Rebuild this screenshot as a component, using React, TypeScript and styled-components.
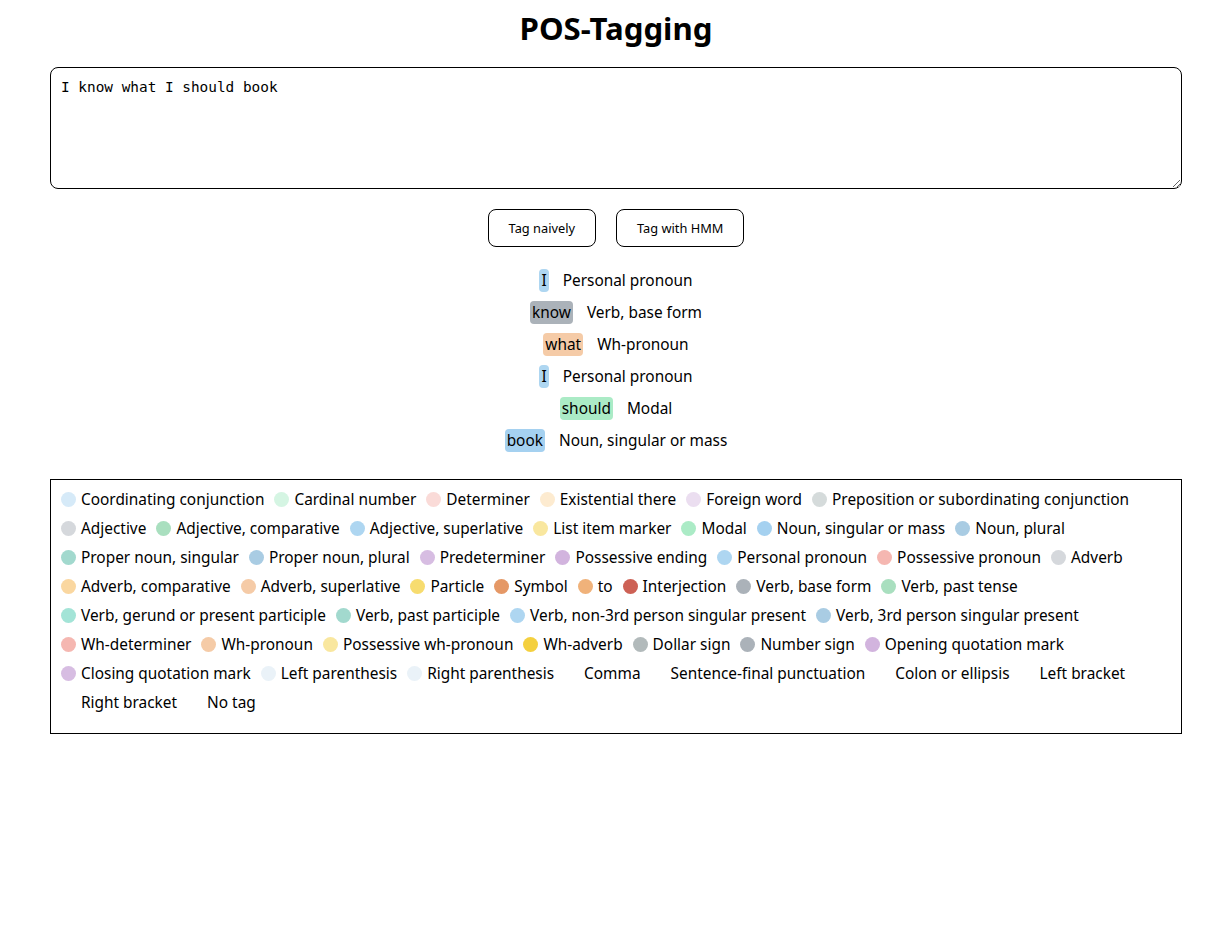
import React, { useState } from 'react';
import styled, { createGlobalStyle } from 'styled-components';

const GlobalStyle = createGlobalStyle`
  html, body {
    margin: 0;
    padding: 0;
    background: #ffffff;
  }
  body {
    font-family: 'Noto Sans', 'Open Sans', sans-serif;
    color: #000000;
  }
`;

const TAGS: { tag: string; label: string; color?: string }[] = [
  { tag: 'CC', label: 'Coordinating conjunction', color: '#d6eaf8' },
  { tag: 'CD', label: 'Cardinal number', color: '#d5f5e3' },
  { tag: 'DT', label: 'Determiner', color: '#fadbd8' },
  { tag: 'EX', label: 'Existential there', color: '#fdebd0' },
  { tag: 'FW', label: 'Foreign word', color: '#ebdef0' },
  { tag: 'IN', label: 'Preposition or subordinating conjunction', color: '#d5dbdb' },
  { tag: 'JJ', label: 'Adjective', color: '#d5d8dc' },
  { tag: 'JJR', label: 'Adjective, comparative', color: '#a9dfbf' },
  { tag: 'JJS', label: 'Adjective, superlative', color: '#aed6f1' },
  { tag: 'LS', label: 'List item marker', color: '#f9e79f' },
  { tag: 'MD', label: 'Modal', color: '#abebc6' },
  { tag: 'NN', label: 'Noun, singular or mass', color: '#a5d1f0' },
  { tag: 'NNS', label: 'Noun, plural', color: '#a9cce3' },
  { tag: 'NNP', label: 'Proper noun, singular', color: '#a2d9ce' },
  { tag: 'NNPS', label: 'Proper noun, plural', color: '#a9cce3' },
  { tag: 'PDT', label: 'Predeterminer', color: '#d7bde2' },
  { tag: 'POS', label: 'Possessive ending', color: '#d2b4de' },
  { tag: 'PRP', label: 'Personal pronoun', color: '#aed6f1' },
  { tag: 'PRP$', label: 'Possessive pronoun', color: '#f5b7b1' },
  { tag: 'RB', label: 'Adverb', color: '#d5d8dc' },
  { tag: 'RBR', label: 'Adverb, comparative', color: '#fad7a0' },
  { tag: 'RBS', label: 'Adverb, superlative', color: '#f5cba7' },
  { tag: 'RP', label: 'Particle', color: '#f7dc6f' },
  { tag: 'SYM', label: 'Symbol', color: '#e59866' },
  { tag: 'TO', label: 'to', color: '#f0b27a' },
  { tag: 'UH', label: 'Interjection', color: '#cd6155' },
  { tag: 'VB', label: 'Verb, base form', color: '#abb2b9' },
  { tag: 'VBD', label: 'Verb, past tense', color: '#a9dfbf' },
  { tag: 'VBG', label: 'Verb, gerund or present participle', color: '#a3e4d7' },
  { tag: 'VBN', label: 'Verb, past participle', color: '#a2d9ce' },
  { tag: 'VBP', label: 'Verb, non-3rd person singular present', color: '#aed6f1' },
  { tag: 'VBZ', label: 'Verb, 3rd person singular present', color: '#a9cce3' },
  { tag: 'WDT', label: 'Wh-determiner', color: '#f5b7b1' },
  { tag: 'WP', label: 'Wh-pronoun', color: '#f5cba7' },
  { tag: 'WP$', label: 'Possessive wh-pronoun', color: '#f9e79f' },
  { tag: 'WRB', label: 'Wh-adverb', color: '#f4d03f' },
  { tag: '$', label: 'Dollar sign', color: '#b2babb' },
  { tag: '#', label: 'Number sign', color: '#abb2b9' },
  { tag: '``', label: 'Opening quotation mark', color: '#d2b4de' },
  { tag: "''", label: 'Closing quotation mark', color: '#d7bde2' },
  { tag: '(', label: 'Left parenthesis', color: '#eaf2f8' },
  { tag: ')', label: 'Right parenthesis', color: '#eaf2f8' },
  { tag: ',', label: 'Comma' },
  { tag: '.', label: 'Sentence-final punctuation' },
  { tag: ':', label: 'Colon or ellipsis' },
  { tag: '-LRB-', label: 'Left bracket' },
  { tag: '-RRB-', label: 'Right bracket' },
  { tag: '', label: 'No tag' },
];

const TAGGED: { word: string; tag: string }[] = [
  { word: 'I', tag: 'PRP' },
  { word: 'know', tag: 'VB' },
  { word: 'what', tag: 'WP' },
  { word: 'I', tag: 'PRP' },
  { word: 'should', tag: 'MD' },
  { word: 'book', tag: 'NN' },
];

const findTag = (tag: string) => TAGS.find((t) => t.tag === tag);

export default function App() {
  const [text, setText] = useState('I know what I should book');

  return (
    <>
      <GlobalStyle />
      <Page>
        <Title>POS-Tagging</Title>
        <SentenceInput value={text} onChange={(e) => setText(e.target.value)} spellCheck={false} />

        <ButtonRow>
          <ActionButton>Tag naively</ActionButton>
          <ActionButton>Tag with HMM</ActionButton>
        </ButtonRow>

        <Results>
          {TAGGED.map((item, i) => {
            const info = findTag(item.tag);
            return (
              <ResultRow key={i}>
                <WordChip $color={info?.color}>{item.word}</WordChip>
                <span>{info?.label}</span>
              </ResultRow>
            );
          })}
        </Results>

        <Legend>
          {TAGS.map((t) => (
            <LegendItem key={t.tag + t.label}>
              <Dot $color={t.color} />
              {t.label}
            </LegendItem>
          ))}
        </Legend>
      </Page>
    </>
  );
}

const Page = styled.div`
  width: 1132px;
  margin-left: 50px;
  display: flex;
  flex-direction: column;
`;

const Title = styled.h1`
  margin: 10px 0 21px;
  font-size: 31.2px;
  line-height: 36px;
  font-weight: 700;
  text-align: center;
`;

const SentenceInput = styled.textarea`
  box-sizing: border-box;
  width: 100%;
  height: 122px;
  padding: 11px 10px;
  border: 1px solid #000000;
  border-radius: 8px;
  font-family: 'DejaVu Sans Mono', monospace;
  font-size: 14.4px;
  line-height: 17px;
  color: #000000;
  resize: vertical;
  outline: none;
`;

const ButtonRow = styled.div`
  display: flex;
  justify-content: center;
  gap: 20px;
  margin-top: 20px;
`;

const ActionButton = styled.button`
  height: 38px;
  padding: 0 20px;
  background: #ffffff;
  border: 1px solid #000000;
  border-radius: 8px;
  font-family: 'Noto Sans', sans-serif;
  font-size: 12.8px;
  color: #000000;
  cursor: pointer;
`;

const Results = styled.div`
  display: flex;
  flex-direction: column;
  align-items: center;
  margin: 17px 0 23px;
`;

const ResultRow = styled.div`
  display: flex;
  align-items: center;
  gap: 14px;
  height: 32px;
  font-size: 15.4px;
`;

const WordChip = styled.span<{ $color?: string }>`
  padding: 1px 2px 0;
  line-height: 22px;
  border-radius: 4px;
  background: ${(p) => p.$color ?? 'transparent'};
`;

const Legend = styled.div`
  display: flex;
  flex-wrap: wrap;
  padding: 5px 10px 16px;
  border: 1px solid #000000;
  font-size: 15.4px;
`;

const LegendItem = styled.div`
  display: flex;
  align-items: center;
  height: 29px;
  margin-right: 10px;
  white-space: nowrap;
`;

const Dot = styled.span<{ $color?: string }>`
  width: 15px;
  height: 15px;
  margin-right: 5px;
  border-radius: 50%;
  background: ${(p) => p.$color ?? 'transparent'};
`;
